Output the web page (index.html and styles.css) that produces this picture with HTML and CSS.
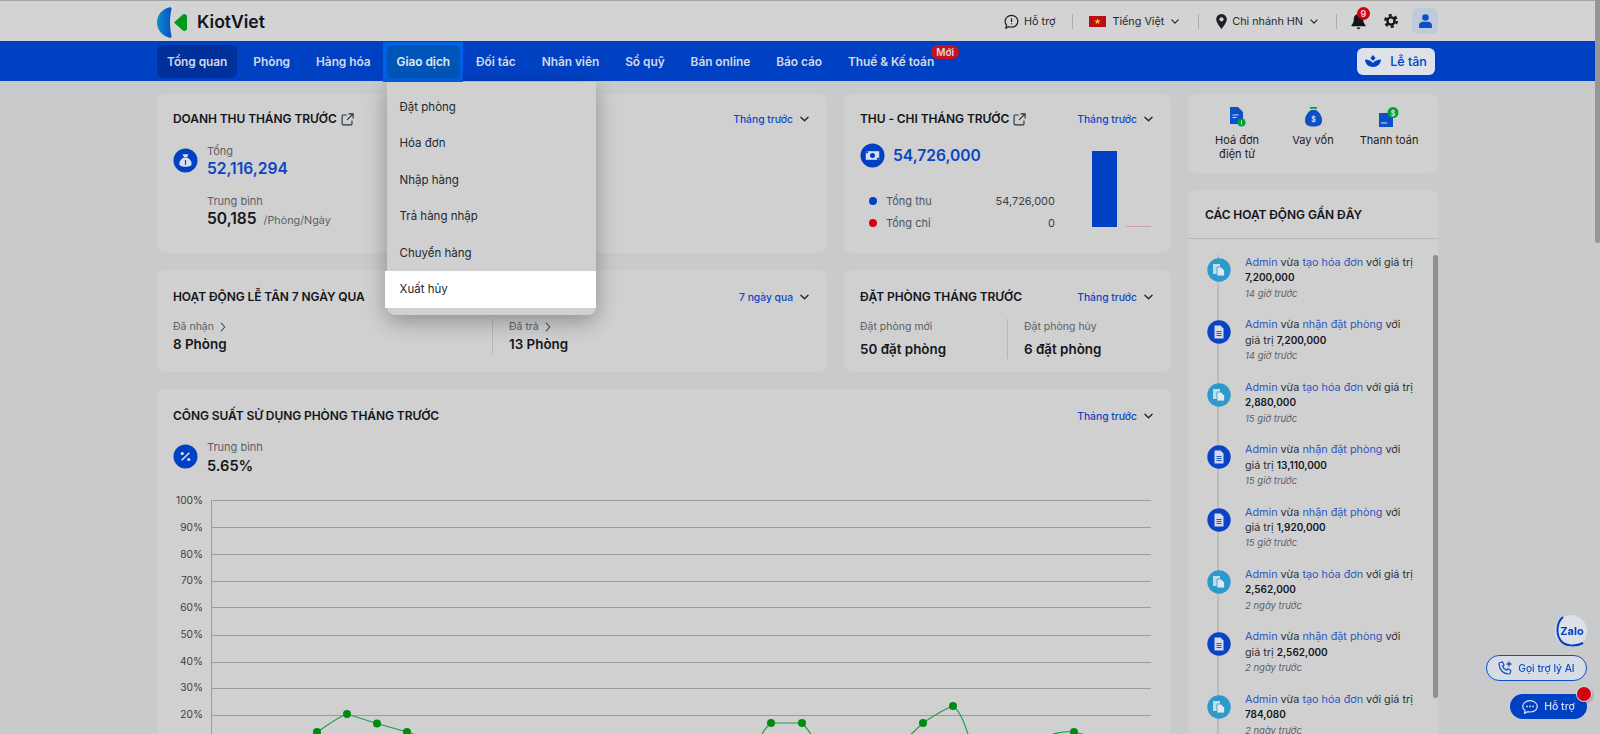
FILE: index.html
```html
<!DOCTYPE html>
<html lang="vi">
<head>
<meta charset="utf-8">
<title>KiotViet</title>
<link rel="stylesheet" href="styles.css">
</head>
<body>
<svg class="defs" width="0" height="0" aria-hidden="true">
  <symbol id="chev" viewBox="0 0 10 6"><path d="M1 1l4 4 4-4" fill="none" stroke="currentColor" stroke-width="1.4" stroke-linecap="round" stroke-linejoin="round"/></symbol>
  <symbol id="chev-r" viewBox="0 0 6 10"><path d="M1.2 1l3.6 4-3.6 4" fill="none" stroke="currentColor" stroke-width="1.1" stroke-linecap="round" stroke-linejoin="round"/></symbol>
  <symbol id="ext" viewBox="0 0 14 14"><path d="M6 2.2H2.2a1 1 0 0 0-1 1v8.6a1 1 0 0 0 1 1h8.6a1 1 0 0 0 1-1V8M8 1h5v5M13 1L6.5 7.5" fill="none" stroke="currentColor" stroke-width="1.2"/></symbol>
  <symbol id="bag" viewBox="0 0 26 26"><circle cx="13" cy="13" r="12.5" fill="#0041c4"/><path d="M10 6.500h6l-1.400 3h-3.200zM11 10.200h4c2.600 1.300 4.400 3.500 4.400 6 0 2.300-1.800 3.300-6.400 3.300s-6.400-1-6.400-3.300c0-2.500 1.800-4.700 4.400-6z" fill="#d9dfee"/><path d="M13 12.500v5" stroke="#0041c4" stroke-width="1.200"/></symbol>
  <symbol id="cash" viewBox="0 0 26 26"><circle cx="13" cy="13" r="12.5" fill="#0041c4"/><path d="M6 8.500h14v9H6z" fill="#d9dfee"/><circle cx="13" cy="13" r="2.600" fill="#0041c4"/><path d="M6 8.500h2.400v2.200H6zM17.600 15.300H20v2.200h-2.400z" fill="#0041c4"/></symbol>
  <symbol id="pct" viewBox="0 0 26 26"><circle cx="13" cy="13" r="12.5" fill="#0041c4"/><path d="M17 9l-8 8" stroke="#e3e6ee" stroke-width="1.5"/><circle cx="9.600" cy="9.800" r="1.600" fill="#e3e6ee"/><circle cx="16.400" cy="16.200" r="1.600" fill="#e3e6ee"/></symbol>
  <symbol id="doc" viewBox="0 0 24 24"><circle cx="12" cy="12" r="11.700" fill="#0a43c6"/><path d="M7.500 5.500h6l3 3v10h-9z" fill="#d4d9ec"/><path d="M9.500 11.500h5M9.500 13.500h5M9.500 15.500h5" stroke="#0a43c6" stroke-width=".9"/></symbol>
  <symbol id="docs" viewBox="0 0 24 24"><circle cx="12" cy="12" r="11.700" fill="#2c9acb"/><path d="M6 6h7v10H6z" fill="#c4dbe8"/><path d="M10 9h4l3.500 3.500V18H10z" fill="#e0e8ee" stroke="#2c9acb" stroke-width=".8"/></symbol>
</svg>

<div class="page">
  <header class="topbar">
    <div class="wrap topbar-in">
      <a class="logo">
        <svg class="logo-mark" width="30" height="31" viewBox="0 0 30 31">
          <defs><linearGradient id="lg" x1="0" y1="0" x2="1" y2="0"><stop offset="0" stop-color="#0a8fcb"/><stop offset="1" stop-color="#0a4fc4"/></linearGradient></defs>
          <path d="M12.500 .3C4.500 2.500 0 8.500 0 15.500s4.500 13 12.500 15.200c1.500.3 2.200-.5 2-2-1-4-1.500-8.500-1.500-13.200s.5-9.200 1.500-13.200c.2-1.500-.5-2.300-2-2z" fill="url(#lg)"/>
          <path d="M17 15.500L25.500 7.800c2-1.500 4.500-.5 4.500 2v11.400c0 2.500-2.500 3.500-4.500 2z" fill="#009a1e"/>
        </svg>
        <span class="logo-text">KiotViet</span>
      </a>
      <div class="top-tools">
        <span class="tool">
          <svg width="15" height="15" viewBox="0 0 16 16"><path d="M8 1.500c3.800 0 6.800 2.800 6.800 6.300S11.800 14 8 14c-.9 0-1.800-.2-2.600-.4L2 15l.8-3C1.800 10.900 1.200 9.500 1.200 7.800 1.200 4.300 4.200 1.500 8 1.500z" fill="none" stroke="#1b1f27" stroke-width="1.300"/><path d="M8 4.500v4M8 9.800v1.200" stroke="#1b1f27" stroke-width="1.300"/></svg>
          Hỗ trợ
        </span>
        <i class="sep"></i>
        <span class="tool">
          <svg class="flag" width="17" height="11" viewBox="0 0 17 11"><rect width="17" height="11" fill="#c00d14"/><path d="M8.500 2.200l.8 2.300h2.400l-1.900 1.400.7 2.300-2-1.400-2 1.400.7-2.300-1.900-1.400h2.400z" fill="#e5d020"/></svg>
          <span class="tool-lang">Tiếng Việt</span>
          <svg class="chev" width="8" height="5"><use href="#chev"/></svg>
        </span>
        <i class="sep sep-b"></i>
        <span class="tool">
          <svg width="11" height="15" viewBox="0 0 11 15"><path d="M5.500 0a5.300 5.300 0 0 1 5.300 5.300C10.800 9 5.500 15 5.500 15S.2 9 .2 5.300A5.300 5.300 0 0 1 5.500 0z" fill="#1b1f27"/><circle cx="5.500" cy="5.300" r="2.100" fill="#d3d3d3"/></svg>
          Chi nhánh HN
          <svg class="chev" width="8" height="5"><use href="#chev"/></svg>
        </span>
        <i class="sep sep-c"></i>
        <span class="bell">
          <svg width="15" height="17" viewBox="0 0 15 17"><path d="M7.500 1c3 0 4.700 2.200 4.700 5 0 3.400 1 4.800 2.300 6.200v1H.5v-1C1.800 10.800 2.800 9.400 2.800 6c0-2.800 1.700-5 4.700-5z" fill="#12151b"/><path d="M5.800 14.500h3.400a1.700 1.700 0 0 1-3.400 0z" fill="#12151b"/></svg>
          <b class="bell-badge">9</b>
        </span>
        <svg class="gear" width="14" height="14" viewBox="0 0 14 14"><circle cx="7" cy="7" r="3.600" fill="none" stroke="#12151b" stroke-width="2.400"/><circle cx="7" cy="7" r="5.800" fill="none" stroke="#12151b" stroke-width="2.400" stroke-dasharray="3.040 3.040"/></svg>
        <span class="avatar">
          <svg width="13" height="14" viewBox="0 0 13 14"><circle cx="6.500" cy="3.500" r="3.300" fill="#0c50c8"/><path d="M0 14v-2.500C0 9.300 1.800 7.800 4 7.800h5c2.200 0 4 1.500 4 3.700V14z" fill="#0c50c8"/></svg>
        </span>
      </div>
    </div>
  </header>

  <nav class="nav">
    <div class="wrap nav-in">
      <ul class="menu">
        <li class="menu-item is-current">Tổng quan</li>
        <li class="menu-item">Phòng</li>
        <li class="menu-item">Hàng hóa</li>
        <li class="menu-item is-open">Giao dịch
          <ul class="dropdown">
            <li>Đặt phòng</li>
            <li>Hóa đơn</li>
            <li>Nhập hàng</li>
            <li>Trả hàng nhập</li>
            <li>Chuyển hàng</li>
            <li class="is-hover">Xuất hủy</li>
          </ul>
        </li>
        <li class="menu-item">Đối tác</li>
        <li class="menu-item">Nhân viên</li>
        <li class="menu-item">Sổ quỹ</li>
        <li class="menu-item">Bán online</li>
        <li class="menu-item">Báo cáo</li>
        <li class="menu-item">Thuế &amp; Kế toán<b class="new">Mới</b></li>
      </ul>
      <button class="reception">
        <svg width="16" height="12" viewBox="0 0 16 12"><path d="M8 0l2.600 3L8 6 5.400 3zM0 4.500c3.500 0 6.300 1.500 8 3.500 1.700-2 4.500-3.500 8-3.500-.3 4.400-3.500 7.500-8 7.500s-7.700-3.100-8-7.500z" fill="#0041c4"/></svg>
        Lễ tân
      </button>
    </div>
  </nav>

  <main class="wrap content">
    <div class="left">
      <section class="card">
        <div class="card-head">
          <h2 class="title">DOANH THU THÁNG TRƯỚC <svg class="ext" width="13" height="13"><use href="#ext"/></svg></h2>
          <span class="period">Tháng trước <svg width="9" height="6"><use href="#chev"/></svg></span>
        </div>
        <div class="metric">
          <svg class="round" width="25" height="25"><use href="#bag"/></svg>
          <div>
            <div class="label">Tổng</div>
            <div class="big blue">52,116,294</div>
            <div class="label label-gap">Trung bình</div>
            <div class="big">50,185 <span class="unit">/Phòng/Ngày</span></div>
          </div>
        </div>
      </section>

      <section class="card">
        <div class="card-head">
          <h2 class="title">THU - CHI THÁNG TRƯỚC <svg class="ext" width="13" height="13"><use href="#ext"/></svg></h2>
          <span class="period">Tháng trước <svg width="9" height="6"><use href="#chev"/></svg></span>
        </div>
        <div class="flow">
          <div class="flow-main">
            <div class="flow-total">
              <svg width="25" height="25"><use href="#cash"/></svg>
              <span class="big blue">54,726,000</span>
            </div>
            <div class="legend"><i class="dot dot-blue"></i><span class="legend-name">Tổng thu</span><span class="legend-val">54,726,000</span></div>
            <div class="legend"><i class="dot dot-red"></i><span class="legend-name">Tổng chi</span><span class="legend-val">0</span></div>
          </div>
          <div class="bars">
            <i class="bar bar-in"></i>
            <i class="bar bar-out"></i>
          </div>
        </div>
      </section>

      <section class="card">
        <div class="card-head head-low">
          <h2 class="title">HOẠT ĐỘNG LỄ TÂN 7 NGÀY QUA</h2>
          <span class="period">7 ngày qua <svg width="9" height="6"><use href="#chev"/></svg></span>
        </div>
        <div class="split split-wide">
          <div class="split-cell">
            <div class="label-sm">Đã nhận <svg class="arrow" width="6" height="10"><use href="#chev-r"/></svg></div>
            <div class="strong">8 Phòng</div>
          </div>
          <div class="split-cell cell-rule">
            <div class="label-sm">Đã trả <svg class="arrow" width="6" height="10"><use href="#chev-r"/></svg></div>
            <div class="strong">13 Phòng</div>
          </div>
        </div>
      </section>

      <section class="card">
        <div class="card-head head-low">
          <h2 class="title">ĐẶT PHÒNG THÁNG TRƯỚC</h2>
          <span class="period">Tháng trước <svg width="9" height="6"><use href="#chev"/></svg></span>
        </div>
        <div class="split split-narrow">
          <div class="split-cell">
            <div class="label-sm">Đặt phòng mới</div>
            <div class="strong strong-gap">50 đặt phòng</div>
          </div>
          <div class="split-cell cell-rule">
            <div class="label-sm">Đặt phòng hủy</div>
            <div class="strong strong-gap">6 đặt phòng</div>
          </div>
        </div>
      </section>

      <section class="card card-wide">
        <div class="card-head head-low">
          <h2 class="title">CÔNG SUẤT SỬ DỤNG PHÒNG THÁNG TRƯỚC</h2>
          <span class="period">Tháng trước <svg width="9" height="6"><use href="#chev"/></svg></span>
        </div>
        <div class="metric metric-occ">
          <svg class="round" width="25" height="25"><use href="#pct"/></svg>
          <div>
            <div class="label">Trung bình</div>
            <div class="big big-occ">5.65%</div>
          </div>
        </div>
        <svg class="chart" width="990" height="330" viewBox="0 0 990 330">
          <g class="grid">
            <path d="M38 10.500H978M38 37.500H978M38 64.500H978M38 91.500H978M38 117.500H978M38 145.500H978M38 172.500H978M38 198.500H978M38 225.500H978M38 251.500H978"/>
            <path d="M38.500 10.500V300"/>
          </g>
          <g class="ticks">
            <text x="30" y="14">100%</text>
            <text x="30" y="41">90%</text>
            <text x="30" y="68">80%</text>
            <text x="30" y="94">70%</text>
            <text x="30" y="121">60%</text>
            <text x="30" y="148">50%</text>
            <text x="30" y="175">40%</text>
            <text x="30" y="201">30%</text>
            <text x="30" y="228">20%</text>
          </g>
          <g class="series">
            <path d="M144 242C155 235 165 227 174 224L204 233.500L234 242C240 243 245 246 250 249"/>
            <path d="M586 250C590 242 592 238 598 233H629C634 238 637 243 642 250"/>
            <path d="M732 250L750 233C760 226 770 220 780 216C788 222 792 235 797 250"/>
            <path d="M880 244C886 243 890 241 901 242C906 243 910 244 915 246"/>
          </g>
          <g class="points">
            <circle cx="144" cy="242" r="4"/><circle cx="174" cy="224" r="4"/><circle cx="204" cy="233.500" r="4"/><circle cx="234" cy="242" r="4"/>
            <circle cx="598" cy="233" r="4"/><circle cx="629" cy="233" r="4"/>
            <circle cx="750" cy="233" r="4"/><circle cx="780" cy="216" r="4"/>
            <circle cx="901" cy="242" r="4"/>
          </g>
        </svg>
      </section>
    </div>

    <aside class="right">
      <section class="card quick">
        <div class="quick-item">
          <svg width="17" height="20" viewBox="0 0 17 20"><path d="M1 0h8l5 5v12H1z" fill="#0c50c8"/><path d="M3.500 8h6M3.500 10.500h4" stroke="#d6deee" stroke-width="1.200"/><circle cx="12.500" cy="15.500" r="4" fill="#00a038"/><path d="M12.500 13.500v4" stroke="#d6e8d6" stroke-width="1"/></svg>
          <span>Hoá đơn<br>điện tử</span>
        </div>
        <div class="quick-item">
          <svg width="17" height="20" viewBox="0 0 17 20"><path d="M5 0h7v1.800H5z" fill="#00a038"/><path d="M6 3h5c3.500 2.500 6 6 6 10 0 5-3 6.500-8.500 6.500S0 18 0 13c0-4 2.500-7.500 6-10z" fill="#0c50c8"/><text class="bag-s" x="8.500" y="15">$</text></svg>
          <span>Vay vốn</span>
        </div>
        <div class="quick-item">
          <svg width="20" height="20" viewBox="0 0 20 20"><path d="M0 6h14v14H0z" fill="#0c50c8"/><path d="M2 16h6" stroke="#d6deee" stroke-width="1"/><circle cx="14" cy="5.500" r="5.500" fill="#00a038"/><text class="bag-s" x="14" y="8.500">$</text></svg>
          <span>Thanh toán</span>
        </div>
      </section>

      <section class="card activity">
        <h2 class="title activity-title">CÁC HOẠT ĐỘNG GẦN ĐÂY</h2>
        <ul class="feed">
          <li class="feed-item"><svg width="24" height="24"><use href="#docs"/></svg><div><p><a>Admin</a> vừa <a>tạo hóa đơn</a> với giá trị<br><b>7,200,000</b></p><em>14 giờ trước</em></div></li>
          <li class="feed-item"><svg width="24" height="24"><use href="#doc"/></svg><div><p><a>Admin</a> vừa <a>nhận đặt phòng</a> với<br>giá trị <b>7,200,000</b></p><em>14 giờ trước</em></div></li>
          <li class="feed-item"><svg width="24" height="24"><use href="#docs"/></svg><div><p><a>Admin</a> vừa <a>tạo hóa đơn</a> với giá trị<br><b>2,880,000</b></p><em>15 giờ trước</em></div></li>
          <li class="feed-item"><svg width="24" height="24"><use href="#doc"/></svg><div><p><a>Admin</a> vừa <a>nhận đặt phòng</a> với<br>giá trị <b>13,110,000</b></p><em>15 giờ trước</em></div></li>
          <li class="feed-item"><svg width="24" height="24"><use href="#doc"/></svg><div><p><a>Admin</a> vừa <a>nhận đặt phòng</a> với<br>giá trị <b>1,920,000</b></p><em>15 giờ trước</em></div></li>
          <li class="feed-item"><svg width="24" height="24"><use href="#docs"/></svg><div><p><a>Admin</a> vừa <a>tạo hóa đơn</a> với giá trị<br><b>2,562,000</b></p><em>2 ngày trước</em></div></li>
          <li class="feed-item"><svg width="24" height="24"><use href="#doc"/></svg><div><p><a>Admin</a> vừa <a>nhận đặt phòng</a> với<br>giá trị <b>2,562,000</b></p><em>2 ngày trước</em></div></li>
          <li class="feed-item"><svg width="24" height="24"><use href="#docs"/></svg><div><p><a>Admin</a> vừa <a>tạo hóa đơn</a> với giá trị<br><b>784,080</b></p><em>2 ngày trước</em></div></li>
        </ul>
        <i class="feed-thumb"></i>
      </section>
    </aside>
  </main>

  <div class="page-thumb"></div>

  <div class="float zalo">
    <svg width="32" height="32" viewBox="0 0 32 32"><path d="M8 2C1 8 1 20 6 26c4 5 14 6 22 2" fill="none" stroke="#0041c4" stroke-width="2"/></svg>
    <span>Zalo</span>
  </div>
  <div class="float call">
    <svg width="15" height="15" viewBox="0 0 15 15"><path d="M2 1.500l2.500-.5 1.500 3-1.500 1.200c.7 1.800 2.300 3.400 4.100 4.100L9.800 7.800l3 1.500-.5 2.500c-.2.800-1 1.300-1.800 1.200C5.500 12.500 1.800 8.700 1 3.300c-.1-.8.300-1.600 1-1.800z" fill="none" stroke="#0c50c8" stroke-width="1.200"/><path d="M11 .5v5M8.500 3h5" stroke="#0c50c8" stroke-width="1.300"/></svg>
    Gọi trợ lý AI
  </div>
  <div class="float help">
    <svg width="16" height="14" viewBox="0 0 16 14"><path d="M8 .7c4 0 7.300 2.500 7.300 5.700S12 12 8 12c-.8 0-1.500-.1-2.200-.3L2.500 13.300l.6-2.800C1.600 9.500.7 8 .7 6.400.7 3.200 4 .7 8 .7z" fill="none" stroke="#d9dfee" stroke-width="1.200"/><circle cx="5" cy="6.400" r=".9" fill="#d9dfee"/><circle cx="8" cy="6.400" r=".9" fill="#d9dfee"/><circle cx="11" cy="6.400" r=".9" fill="#d9dfee"/></svg>
    Hỗ trợ
    <i class="help-dot"></i>
  </div>
</div>
</body>
</html>
```

FILE: styles.css
```css
* { box-sizing: border-box; }
html, body { margin: 0; height: 100%; overflow: hidden; }
body { font-family: Inter, "Noto Sans", sans-serif; color: #14171c; background: #c8cacc; font-size: 12px; }
ul { list-style: none; margin: 0; padding: 0; }
p, h2 { margin: 0; }
.defs { position: absolute; }
.page { width: 1595px; height: 734px; overflow: hidden; }
.wrap { width: 1281px; margin: 0 auto; }

.topbar { height: 41px; border-top: 1px solid #a4a4a4; background: #d3d3d3; }
.topbar-in { height: 40px; display: flex; align-items: center; justify-content: space-between; }
.logo { display: flex; align-items: center; gap: 10px; }
.logo-mark { margin-top: 3px; }
.logo-text { font-size: 17.600px; font-weight: 600; color: #10151f; }
.top-tools { display: flex; align-items: center; }
.tool { display: flex; align-items: center; gap: 5px; font-size: 10.800px; color: #24282f; }
.tool-lang { margin-left: 1px; }
.chev { color: #1b1f27; margin-left: 2px; }
.sep { width: 1px; height: 15px; background: #a9abae; margin: 0 16px 0 17px; }
.sep-b { margin: 0 17px 0 19px; }
.sep-c { margin: 0 14px 0 18px; }
.bell { position: relative; display: flex; }
.bell-badge { position: absolute; left: 6px; top: -6px; width: 13px; height: 13px; border-radius: 50%; background: #d40010; color: #ddd; font-size: 9px; line-height: 13px; text-align: center; font-weight: 600; }
.gear { margin-left: 18px; }
.avatar { margin-left: 14px; width: 26px; height: 26px; border-radius: 6px; background: #bfcbdd; display: flex; align-items: center; justify-content: center; }

.nav { height: 40px; background: #0041c4; }
.nav-in { height: 40px; display: flex; align-items: center; justify-content: space-between; }
.menu { display: flex; gap: 6px; }
.menu-item { position: relative; height: 33px; line-height: 33px; padding: 0 10px; border-radius: 6px; color: #d4d9e6; font-size: 11.900px; font-weight: 600; letter-spacing: -.04px; white-space: nowrap; }
.is-current { background: #00309a; }
.is-open { z-index: 5; color: #e4e8f0; }
.is-open::before { content: ""; position: absolute; inset: -3px -3px -4px -4px; background: #0061e4; z-index: -1; }
.is-open::after { content: ""; position: absolute; inset: 0; background: #0056b8; border-radius: 6px; z-index: -1; }
.new { position: absolute; right: -15px; top: 0; width: 28px; height: 14px; border-radius: 7px; background: #c9101c; color: #dcdcdc; font-size: 10px; line-height: 14px; text-align: center; font-weight: 600; }
.reception { margin-right: 3px; width: 78px; height: 27px; border: 0; border-radius: 6px; background: #dde1ea; color: #0041c4; font: 500 12.500px Inter, sans-serif; display: flex; align-items: center; justify-content: center; gap: 9px; }

.dropdown { position: absolute; left: 0; top: 37px; width: 209px; height: 233px; padding-top: 7px; background: #d0d0d0; border-radius: 0 0 8px 8px; box-shadow: 0 6px 22px rgba(0, 0, 0, .32); color: #24282f; font-size: 11.500px; font-weight: 400; letter-spacing: 0; }
.dropdown li { height: 36.600px; line-height: 36.600px; padding-left: 13px; }
.dropdown .is-hover { margin-left: -2px; padding-left: 15px; background: #fff; }

.content { display: grid; grid-template-columns: 1014px 250px; column-gap: 17px; padding-top: 13px; }
.left { display: grid; grid-template-columns: 670px 327px; grid-template-rows: 159px 102px auto; gap: 17px; }
.right { display: flex; flex-direction: column; gap: 17px; }
.card { background: #d0d0d0; border-radius: 8px; padding: 17px 16px; }
.card-wide { grid-column: 1 / 3; height: 500px; }
.card-head { display: flex; align-items: center; justify-content: space-between; height: 16px; padding-right: 2px; }
.head-low { margin-top: 2px; }
.title { font-size: 12px; font-weight: 600; color: #12151b; line-height: 16px; letter-spacing: -.08px; white-space: nowrap; display: flex; align-items: center; gap: 4px; }
.ext { color: #2a2e36; }
.period { display: flex; align-items: center; gap: 7px; font-size: 10.300px; font-weight: 500; color: #0b45c4; }
.period svg { color: #1b1f27; }

.metric { display: flex; gap: 9px; margin-top: 16px; }
.round { margin-top: 5px; flex: none; }
.label { font-size: 11px; line-height: 16px; color: #5c6066; }
.label-gap { margin-top: 14px; }
.big { font-size: 15.600px; line-height: 20px; font-weight: 600; color: #14171c; }
.big-occ { font-size: 14.600px; margin-top: 1px; }
.blue { color: #0b45c4; }
.unit { font-size: 10.800px; font-weight: 400; color: #5c6066; margin-left: 3px; }

.flow { display: flex; justify-content: space-between; margin-top: 8px; }
.flow-main { width: 195px; }
.flow-total { display: flex; align-items: center; gap: 8px; margin-top: 8px; margin-bottom: 22px; }
.legend { display: flex; align-items: center; height: 22px; font-size: 11px; color: #4f535a; }
.dot { width: 8px; height: 8px; border-radius: 50%; margin: 0 9px 0 9px; }
.dot-blue { background: #0041c4; }
.dot-red { background: #d80010; }
.legend-val { margin-left: auto; color: #3c4046; }
.bars { display: flex; align-items: flex-end; gap: 9px; height: 77px; margin: 15px 4px 0 0; }
.bar { display: block; width: 25px; }
.bar-in { height: 76px; background: #0041c4; }
.bar-out { height: 1px; background: #cf9ea2; }

.split { display: flex; margin-top: 14px; }
.split-wide .split-cell:first-child { width: 319px; }
.split-narrow .split-cell:first-child { width: 147px; }
.cell-rule { border-left: 1px solid #b4b6b8; padding-left: 16px; }
.label-sm { font-size: 10.500px; line-height: 16px; color: #5c6066; display: flex; align-items: center; gap: 6px; }
.arrow { color: #3c4046; }
.strong { font-size: 13.400px; font-weight: 600; line-height: 20px; margin-top: -1px; color: #14171c; }
.strong-gap { margin-top: 4px; }

.metric-occ { margin-top: 15px; }
.metric-occ .round { margin-top: 5px; }
.chart { display: block; margin: 14px 0 0 0; }
.grid path { fill: none; stroke: #9b9b9b; stroke-width: 1; }
.ticks text { font: 10.200px Inter, sans-serif; fill: #3c4046; text-anchor: end; }
.series path { fill: none; stroke: #1f9a46; stroke-width: 1.100; }
.points circle { fill: #008a12; }

.quick { height: 79px; padding: 13px 0 0; display: grid; grid-template-columns: 76px 76px 76px; justify-content: center; }
.quick-item { display: flex; flex-direction: column; align-items: center; gap: 6px; font-size: 11px; line-height: 14px; text-align: center; color: #1c2027; white-space: nowrap; }
.bag-s { font: 600 7px Inter, sans-serif; fill: #dfe7f2; text-anchor: middle; }

.activity { position: relative; padding: 0; height: 620px; }
.activity-title { height: 49px; padding: 16px 17px 0; border-bottom: 1px solid #b4b6b8; display: block; line-height: 17px; }
.feed { position: relative; padding: 16px 0 0 19px; }
.feed::before { content: ""; position: absolute; left: 29px; top: 16px; bottom: 0; width: 2px; background: #bcbcbc; }
.feed-item { position: relative; display: flex; gap: 14px; height: 62.400px; font-size: 10.800px; line-height: 15.400px; }
.feed-item > svg { flex: none; margin-top: 3px; }
.feed-item p { white-space: nowrap; color: #2b2f36; }
.feed-item a { color: #2f55c0; }
.feed-item b { font-size: 10px; font-weight: 600; color: #14171c; }
.feed-item em { display: block; font-size: 9.500px; color: #5c6066; }
.feed-thumb { position: absolute; right: 0; top: 65px; width: 5px; height: 443px; border-radius: 3px; background: #909090; }

.page-thumb { position: fixed; right: 0; top: 0; width: 5px; height: 243px; background: #969696; border-radius: 0 0 2px 2px; }

.float { position: fixed; display: flex; align-items: center; justify-content: center; white-space: nowrap; }
.zalo { left: 1555px; top: 615px; width: 32px; height: 32px; border-radius: 50%; background: #dde0e6; color: #0041c4; font-size: 11px; font-weight: 700; }
.zalo svg { position: absolute; left: 0; top: 0; }
.zalo span { position: relative; left: 1px; }
.call { left: 1486px; top: 655px; width: 101px; height: 26px; gap: 5px; border: 1px solid #0c50c8; border-radius: 13px; background: #d8dce4; color: #0c50c8; font-size: 10.200px; font-weight: 500; }
.help { left: 1510px; top: 694px; width: 77px; height: 25px; gap: 6px; border-radius: 13px; background: #0041c4; color: #d9dfee; font-size: 10.500px; font-weight: 500; }
.help-dot { position: absolute; right: -4px; top: -7px; width: 14px; height: 14px; border-radius: 50%; background: #d40010; box-shadow: 0 0 0 1px #d8d8d8, 1px 1px 3px rgba(0, 0, 0, .5); }
```
